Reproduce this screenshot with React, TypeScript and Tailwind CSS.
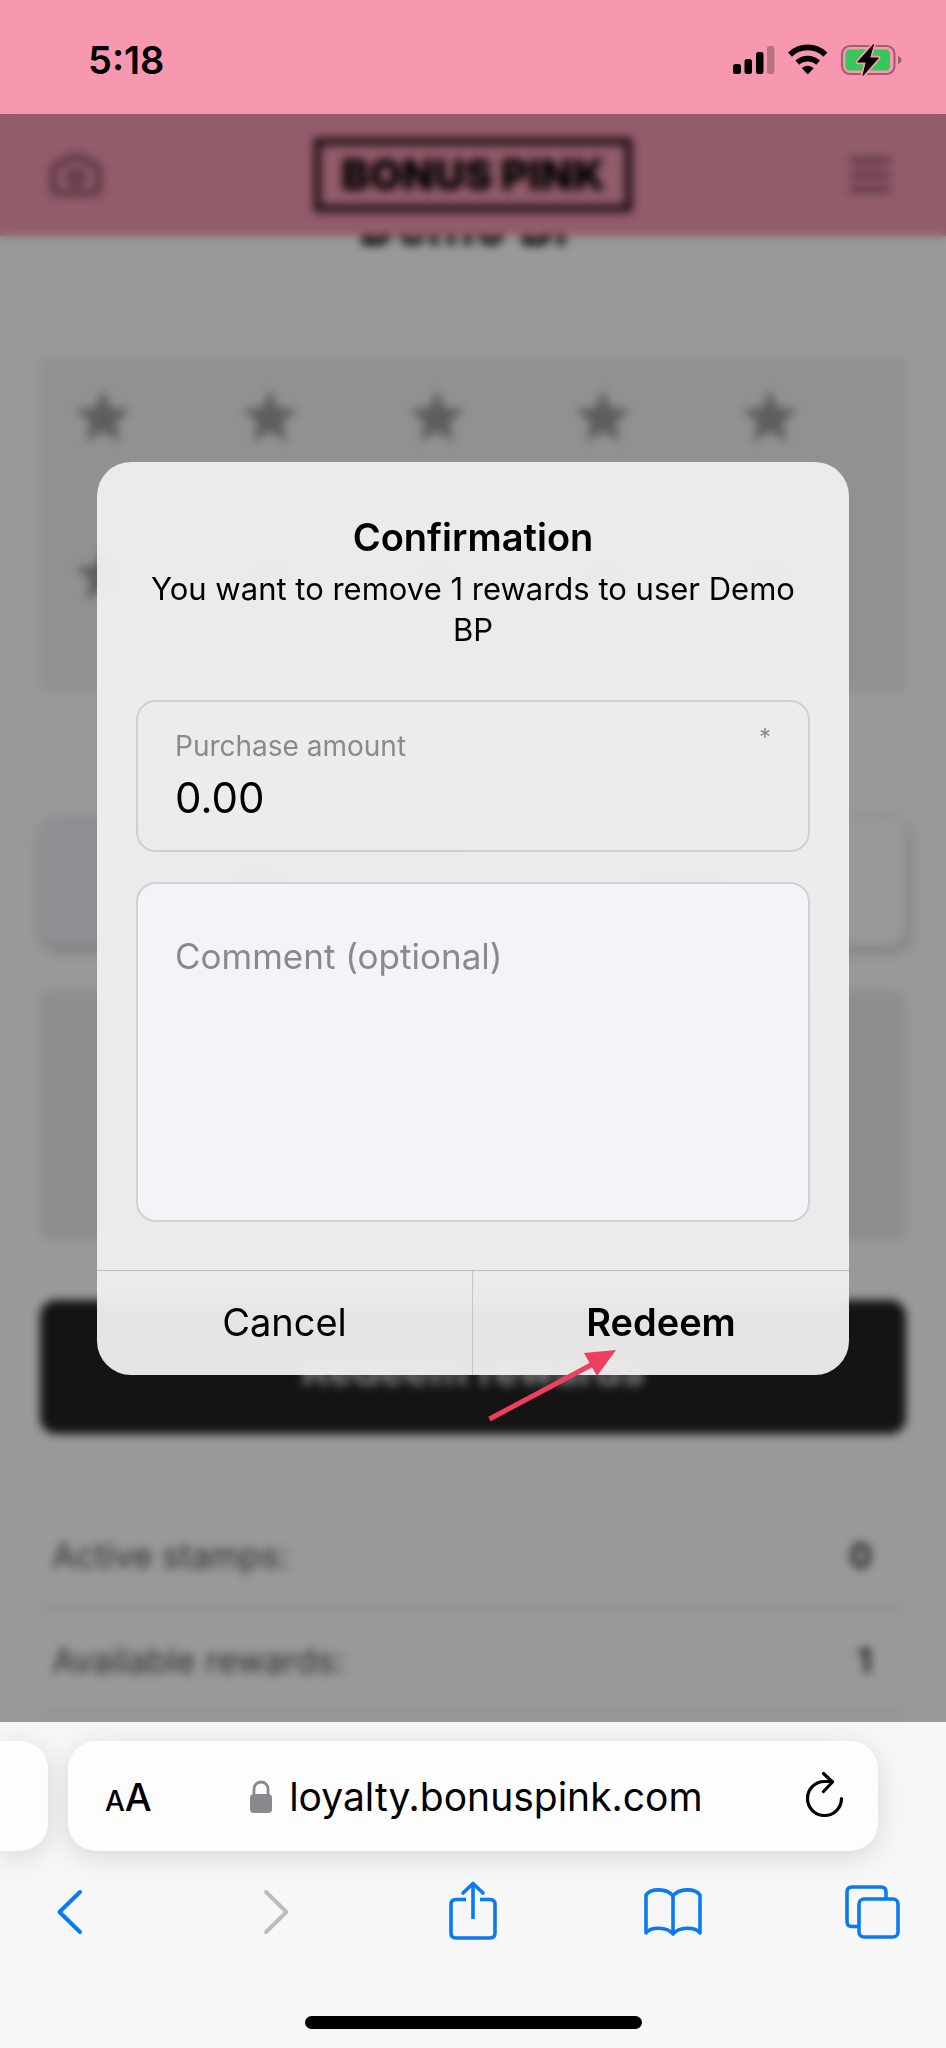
import { useState } from "react"
import { Camera } from "lucide-react"
import { MdStar } from "react-icons/md"

const stampRows = [0, 1]
const stampsPerRow = [0, 1, 2, 3, 4]

const totals = [
  { label: "Active stamps:", value: "0" },
  { label: "Available rewards:", value: "1" },
]

function StatusIcons() {
  return (
    <svg width="174" height="40" viewBox="0 0 174 40" aria-hidden="true">
      <rect x="3" y="24" width="8" height="10" rx="2.5" />
      <rect x="14.5" y="19" width="7.5" height="15" rx="2.5" />
      <rect x="26" y="12" width="7.5" height="22" rx="2.5" />
      <rect x="37" y="6" width="7.5" height="28" rx="2.5" opacity="0.25" />

      <path d="M77.7 34 L72.2 28.2 A8.6 8.6 0 0 1 83.2 28.2 Z" strokeWidth="0.8" stroke="black" strokeLinejoin="round" />
      <path d="M67.3 22.6 A15.6 15.6 0 0 1 88.1 22.6" fill="none" stroke="black" strokeWidth="5.8" />
      <path d="M60 14.6 A25.4 25.4 0 0 1 95.4 14.6" fill="none" stroke="black" strokeWidth="5.8" />

      <rect x="112" y="6" width="52.5" height="28" rx="8" fill="none" stroke="#a05f70" strokeWidth="2.2" />
      <path d="M168 16 Q171.5 17.5 171.5 20 Q171.5 22.5 168 24 Z" fill="#a05f70" />
      <rect x="115.5" y="9.5" width="44.5" height="21" rx="4.5" fill="#34c759" />
      <path
        d="M143.5 4.5 L127.8 22 H136.3 L133 35.5 L148.3 18 H139.6 Z"
        stroke="#f797b0"
        strokeWidth="4.5"
        strokeLinejoin="round"
      />
      <path d="M143.5 4.5 L127.8 22 H136.3 L133 35.5 L148.3 18 H139.6 Z" stroke="black" strokeWidth="1" strokeLinejoin="round" />
    </svg>
  )
}

function StatusBar() {
  return (
    <div className="flex h-[114px] items-center justify-between bg-[#f797b0] pt-1.5 pr-[42px] pl-[88px]">
      <span className="text-[38px] leading-none font-semibold">5:18</span>
      <StatusIcons />
    </div>
  )
}

function LoyaltyPage() {
  return (
    <div className="bg-white">
      <header className="relative z-10 flex h-[122px] items-center justify-between bg-[#f499b1] px-12">
        <button type="button" aria-label="Scan" className="flex w-14 justify-center text-[#6b3a4a]">
          <Camera size={54} strokeWidth={2} />
        </button>
        <div className="border-[7px] border-[#231318] px-5 py-2 text-[42px] leading-[44px] font-black">
          BONUS PINK
        </div>
        <button type="button" aria-label="Menu" className="flex w-14 flex-col items-center gap-2.5 text-[#5a2e3c]">
          <span className="h-1 w-10 bg-current" />
          <span className="h-1 w-10 bg-current" />
          <span className="h-1 w-10 bg-current" />
        </button>
      </header>

      <h1 className="-mt-[42px] text-center text-[52px] leading-[66px] font-bold">Demo BP</h1>

      <div className="px-10">
        <div className="mt-[98px] flex flex-col gap-[92px] bg-[#f2f2f2] pt-[26px] pr-[103px] pb-[84px] pl-[30px]">
          {stampRows.map((row) => (
            <div key={row} className="flex justify-between text-[#9c9c9c]">
              {stampsPerRow.map((stamp) => (
                <MdStar key={stamp} size={66} />
              ))}
            </div>
          ))}
        </div>

        <div className="mt-[126px] grid h-32 grid-cols-2 rounded-2xl bg-white text-3xl shadow-[2px_4px_12px_rgba(0,0,0,0.28)]">
          <button type="button" className="rounded-l-2xl bg-[#eeeef6]">Add</button>
          <button type="button">Redeem</button>
        </div>

        <div className="mt-11 h-[250px] rounded-xl bg-[#ececec]" />

        <button
          type="button"
          className="mt-[60px] flex h-[134px] w-full items-center justify-center rounded-2xl bg-[#222] pt-1 text-[42px] font-bold text-white/80"
        >
          Redeem rewards
        </button>

        <dl className="mt-[70px] text-[34px]">
          {totals.map((item) => (
            <div
              key={item.label}
              className="flex h-[105px] items-center justify-between border-b-2 border-[#e4e4e4] pr-[34px] pl-3"
            >
              <dt className="text-[#555]">{item.label}</dt>
              <dd className="font-semibold text-[#222]">{item.value}</dd>
            </div>
          ))}
        </dl>
      </div>
    </div>
  )
}

function PointerArrow() {
  return (
    <svg
      className="pointer-events-none absolute -bottom-[50px] left-1/2 ml-3"
      width="136"
      height="80"
      viewBox="0 0 136 80"
      aria-hidden="true"
    >
      <path d="M4.500 74 L108 19" stroke="#ee3f5f" strokeWidth="5" />
      <path d="M131 5 L99 8 L112 31 Z" fill="#ee3f5f" />
    </svg>
  )
}

function ConfirmDialog() {
  const [amount, setAmount] = useState("0.00")
  const [comment, setComment] = useState("")

  return (
    <div
      role="dialog"
      aria-labelledby="confirm-title"
      className="relative w-full rounded-[34px] bg-[#f0f0f0]/95 pt-12 backdrop-blur-md"
    >
      <h2 id="confirm-title" className="text-center text-[38px] leading-[54px] font-semibold">
        Confirmation
      </h2>
      <p className="mt-1 px-10 text-center text-[31px] leading-[41px]">
        You want to remove 1 rewards to user Demo BP
      </p>

      <div className="mt-[50px] flex flex-col gap-[30px] px-[39px]">
        <div className="relative h-[152px] rounded-[20px] border-2 border-[#d0d0d3] px-[37px] pt-6">
          <label htmlFor="amount" className="block text-[28px] leading-10 text-[#8a8a8e]">
            Purchase amount
          </label>
          <input
            id="amount"
            inputMode="decimal"
            value={amount}
            onChange={(e) => setAmount(e.target.value)}
            className="mt-1 block h-14 w-full bg-transparent text-[42px] leading-[56px] outline-none"
          />
          <span className="absolute top-5 right-[37px] text-2xl text-[#8a8a8e]">*</span>
        </div>
        <textarea
          aria-label="Comment (optional)"
          placeholder="Comment (optional)"
          value={comment}
          onChange={(e) => setComment(e.target.value)}
          className="block h-[340px] resize-none rounded-[20px] border-2 border-[#d0d0d5] bg-[#f3f3f8] px-[37px] py-12 text-[35px] leading-[48px] outline-none placeholder:text-[#8a8a8e]"
        />
      </div>

      <div className="mt-12 grid h-[105px] grid-cols-2 border-t border-[#bdbdbf] text-[38px]">
        <button type="button" className="border-r border-[#c4c4c6]">Cancel</button>
        <button type="button" className="font-semibold">Redeem</button>
      </div>

      <PointerArrow />
    </div>
  )
}

function BrowserBar() {
  return (
    <div className="overflow-hidden bg-[#f7f7f7] pt-[19px] pb-[19px]">
      <div className="flex h-[110px] gap-5 pr-[68px]">
        <div className="w-12 rounded-r-[28px] bg-[#fdfdfd] shadow-[0_6px_28px_rgba(0,0,0,0.13)]" />
        <div className="flex flex-1 items-center justify-between rounded-[28px] bg-[#fdfdfd] pt-0.5 pr-[30px] pl-[37px] shadow-[0_6px_28px_rgba(0,0,0,0.13)]">
          <button type="button" aria-label="Page settings" className="flex items-baseline text-[38px] font-medium">
            <span className="text-[28px]">A</span>
            <span>A</span>
          </button>
          <button type="button" className="flex items-center gap-4 text-[39px]">
            <svg width="24" height="34" viewBox="0 0 24 34" aria-hidden="true">
              <rect x="1" y="14" width="22" height="19" rx="4" fill="#8a8a8e" />
              <path d="M5 15 V9 A7 7 0 0 1 19 9 V15" fill="none" stroke="#8a8a8e" strokeWidth="2.8" />
            </svg>
            loyalty.bonuspink.com
          </button>
          <button type="button" aria-label="Reload">
            <svg width="48" height="52" viewBox="0 0 48 52" fill="none" stroke="black" strokeWidth="3.2" strokeLinecap="round" strokeLinejoin="round" aria-hidden="true">
              <path d="M41.500 27.500 A17 17 0 1 1 24.500 10.500 H32.500" />
              <path d="M23.500 2.500 L32.500 11 L23.500 20.500" />
            </svg>
          </button>
        </div>
      </div>

      <nav className="mt-[29px] flex justify-between pr-[41px] pl-[38px] text-[#0a7af0]">
        <button type="button" aria-label="Back">
          <svg width="64" height="64" viewBox="0 0 64 64" fill="none" stroke="currentColor" strokeWidth="4" strokeLinecap="round" strokeLinejoin="round">
            <path d="M42 12 L21.500 32 L42 52" />
          </svg>
        </button>
        <button type="button" aria-label="Forward" className="text-[#bdbdbf]">
          <svg width="64" height="64" viewBox="0 0 64 64" fill="none" stroke="currentColor" strokeWidth="4" strokeLinecap="round" strokeLinejoin="round">
            <path d="M27 12 L47.500 32 L27 52" />
          </svg>
        </button>
        <button type="button" aria-label="Share">
          <svg width="64" height="64" viewBox="0 0 64 64" fill="none" stroke="currentColor" strokeWidth="3.6" strokeLinecap="butt" strokeLinejoin="round">
            <path d="M26 19.5 H16 Q11 19.5 11 24.5 V53 Q11 58 16 58 H50 Q55 58 55 53 V24.5 Q55 19.5 50 19.5 H40" />
            <path d="M33 39 V4" />
            <path d="M23 13 L33 3.5 L43 13" strokeLinecap="round" />
          </svg>
        </button>
        <button type="button" aria-label="Bookmarks">
          <svg width="64" height="64" viewBox="0 0 64 64" fill="none" stroke="currentColor" strokeWidth="3.6" strokeLinejoin="round">
            <path d="M33 16 C27 8 11 8 6 15 V53 C11 46.500 27 46.500 33 54 C39 46.500 55 46.500 60 53 V15 C55 8 39 8 33 16 Z" />
            <path d="M33 16 V54" />
          </svg>
        </button>
        <button type="button" aria-label="Tabs">
          <svg width="64" height="64" viewBox="0 0 64 64" fill="none" stroke="currentColor" strokeWidth="3.6">
            <path d="M18 46.500 H11 Q6 46.500 6 41.500 V12 Q6 7 11 7 H40 Q45 7 45 12 V19" />
            <rect x="18" y="19" width="39" height="38" rx="5" />
          </svg>
        </button>
      </nav>

      <div className="mx-auto mt-[72px] h-[13px] w-[337px] rounded-full bg-black" />
    </div>
  )
}

export default function App() {
  return (
    <div className="flex min-h-screen flex-col bg-white font-['Inter','Liberation_Sans',sans-serif] text-black">
      <StatusBar />
      <main className="relative flex-1 overflow-hidden">
        <LoyaltyPage />
        <div className="absolute inset-0 z-20 bg-black/40 backdrop-blur-[5px]" />
        <div className="absolute inset-0 z-30 flex items-center px-[97px]">
          <ConfirmDialog />
        </div>
      </main>
      <BrowserBar />
    </div>
  )
}
